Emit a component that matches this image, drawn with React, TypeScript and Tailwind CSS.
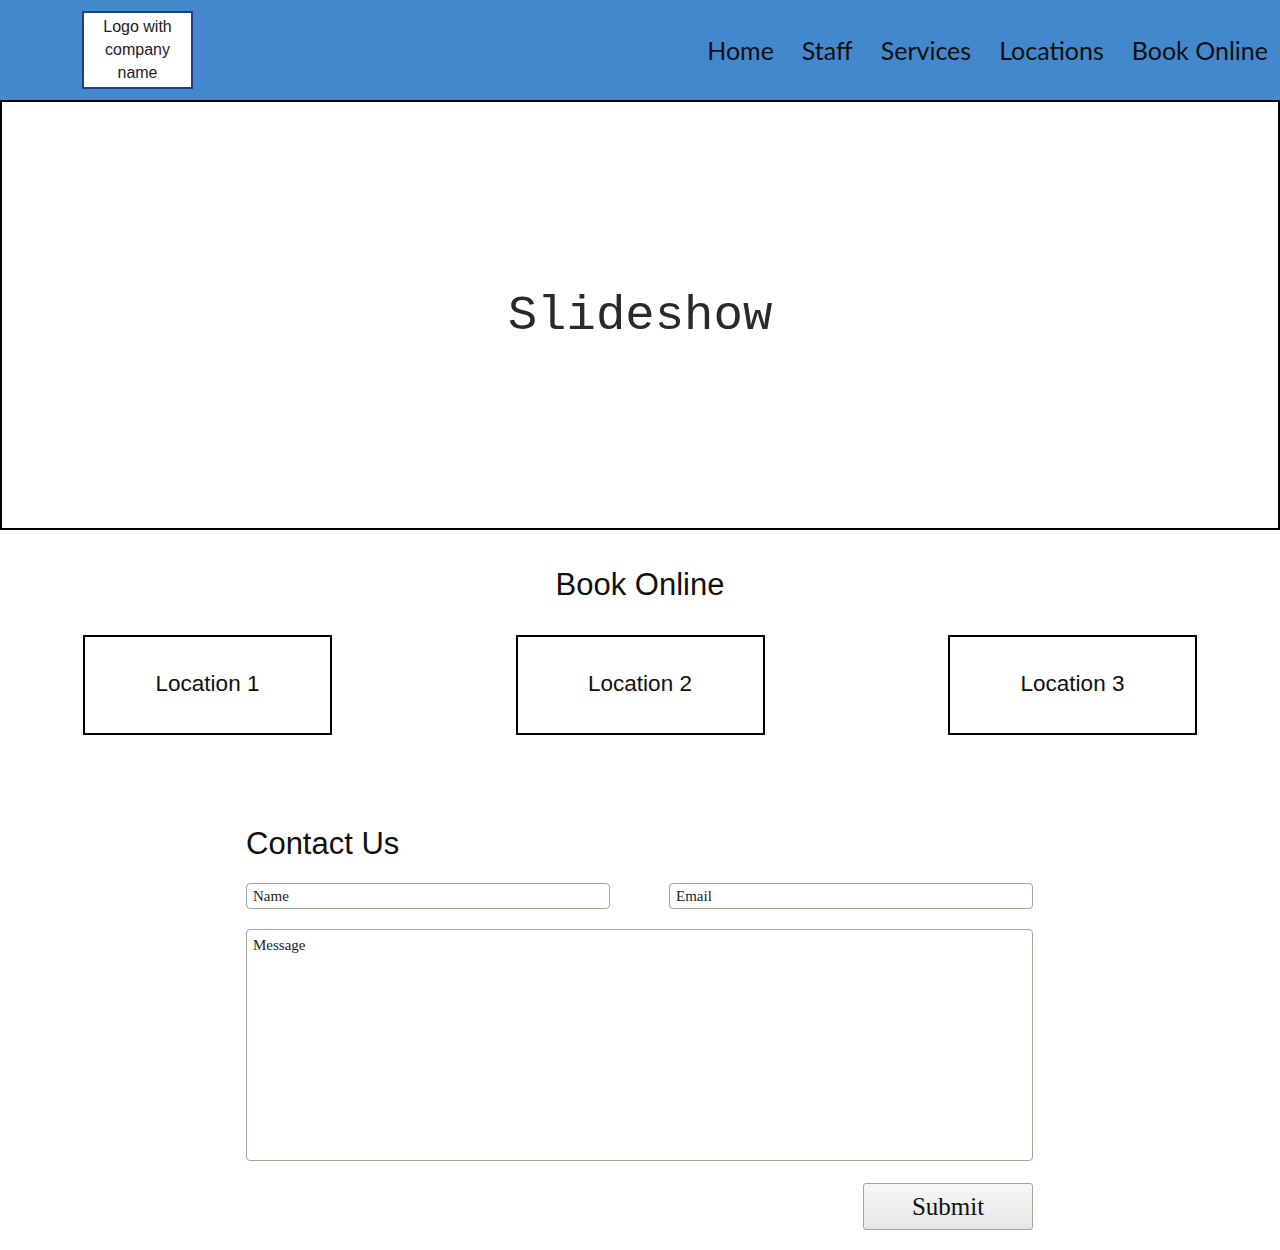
const navItems = ["Home", "Staff", "Services", "Locations", "Book Online"];
const locations = ["Location 1", "Location 2", "Location 3"];

export default function App() {
  return (
    <div className="w-[1280px] bg-white font-['Liberation_Sans',Arial,sans-serif] text-black">
      {/* Header */}
      <header className="h-[100px] bg-[#4388cc] flex items-start justify-between pl-[82px] pr-[12px]">
        <div className="mt-[11px] w-[111px] h-[78px] border-2 border-[#233c8e] bg-white flex items-center justify-center text-center text-[16px] leading-[23px] text-[#222] pb-[2px]">
          Logo with
          <br />
          company
          <br />
          name
        </div>
        <nav className="mt-[33px] flex gap-[28px] font-['Lato',sans-serif] text-[25px] leading-[34px] text-[#111]">
          {navItems.map((item) => (
            <a key={item} href="#">
              {item}
            </a>
          ))}
        </nav>
      </header>

      {/* Slideshow */}
      <section className="h-[430px] border-2 border-black flex items-center justify-center">
        <span className="font-['Liberation_Mono','Courier_New',monospace] text-[49px] text-[#2a2a2a] mt-[3px]">
          Slideshow
        </span>
      </section>

      {/* Book online */}
      <section className="pt-[35px]">
        <h2 className="text-center text-[31px] leading-[40px] text-[#111]">Book Online</h2>
        <div className="mt-[30px] flex justify-between px-[83px]">
          {locations.map((loc) => (
            <div
              key={loc}
              className="w-[249px] h-[100px] border-2 border-black flex items-center justify-center text-[22.5px] text-[#111] pb-[2px]"
            >
              {loc}
            </div>
          ))}
        </div>
      </section>

      {/* Contact */}
      <section className="mt-[89px] ml-[246px] w-[787px] pb-[20px]">
        <h2 className="text-[31px] leading-[40px] text-[#111]">Contact Us</h2>
        <div className="mt-[19px] flex justify-between">
          <input
            placeholder="Name"
            className="w-[364px] h-[26px] rounded-[4px] border border-[#aaa295] px-[6px] font-['Liberation_Serif',serif] text-[15px] placeholder:text-[#222] outline-none"
          />
          <input
            placeholder="Email"
            className="w-[364px] h-[26px] rounded-[4px] border border-[#aaa295] px-[6px] font-['Liberation_Serif',serif] text-[15px] placeholder:text-[#222] outline-none"
          />
        </div>
        <textarea
          placeholder="Message"
          className="mt-[20px] block w-full h-[232px] resize-none rounded-[4px] border border-[#aaa295] px-[6px] py-[4px] font-['Liberation_Serif',serif] text-[15px] placeholder:text-[#222] outline-none"
        />
        <div className="mt-[22px] flex justify-end">
          <button className="w-[170px] h-[47px] rounded-[3px] border border-[#a9a295] bg-gradient-to-b from-[#f7f7f7] to-[#e6e6e6] font-['Liberation_Serif',serif] text-[25px] text-[#111]">
            Submit
          </button>
        </div>
      </section>
    </div>
  );
}
